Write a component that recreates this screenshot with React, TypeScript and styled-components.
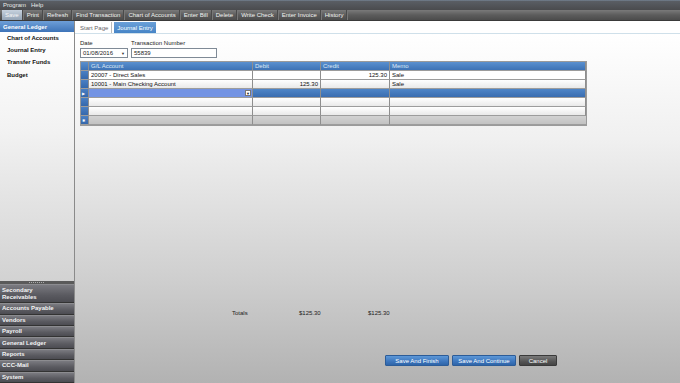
import React from 'react';
import styled, { createGlobalStyle, css } from 'styled-components';

const GlobalStyle = createGlobalStyle`
  html, body {
    margin: 0;
    padding: 0;
    width: 680px;
    height: 383px;
    overflow: hidden;
    font-family: "Liberation Sans", Arial, sans-serif;
  }
  * { box-sizing: border-box; }
`;

const Shell = styled.div`
  width: 680px;
  height: 383px;
  display: grid;
  grid-template-rows: 10px 11px 1fr;
  font-size: 6px;
  color: #222;
`;

const MenuBar = styled.div`
  display: flex;
  align-items: center;
  gap: 5px;
  padding: 0 3px;
  background: linear-gradient(#7d8fa3 0, #5a5e64 1px, #4a4b4e 100%);
  color: #e8e8e8;
`;

const Toolbar = styled.div`
  display: flex;
  align-items: stretch;
  padding: 0 2px;
  background: linear-gradient(#7a7a7a, #5c5c5c 50%, #4c4c4c);
  border-bottom: 1px solid #3a3a3a;
`;

const ToolButton = styled.div<{ $active?: boolean }>`
  display: flex;
  align-items: center;
  padding: 0 3px;
  color: #f2f2f2;
  border-right: 1px solid #4a4a4a;
  box-shadow: 1px 0 0 #777;
  margin-right: 1px;
  ${(p) =>
    p.$active &&
    css`
      background: linear-gradient(#c7d2de, #93a3b5);
      color: #f7f7f7;
    `}
`;

const Body = styled.div`
  display: grid;
  grid-template-columns: 75px 1fr;
  min-height: 0;
`;

const Sidebar = styled.div`
  display: flex;
  flex-direction: column;
  border-right: 1px solid #8a8a8a;
  min-height: 0;
`;

const SideHeader = styled.div`
  height: 11px;
  display: flex;
  align-items: center;
  padding-left: 3px;
  font-weight: bold;
  color: #fff;
  background: linear-gradient(#6e9fd8, #3e74b8);
`;

const SideList = styled.div`
  flex: 1;
  display: flex;
  flex-direction: column;
  gap: 6.2px;
  padding: 3px 0 0 7px;
  background: linear-gradient(#ffffff, #f2f2f2 40%, #d2d2d2);
`;

const SideItem = styled.div`
  font-weight: bold;
  color: #111;
  line-height: 6px;
`;

const Grip = styled.div`
  height: 3px;
  background: #5a5a5a;
  display: flex;
  justify-content: center;
  align-items: center;
  &::after {
    content: '';
    width: 16px;
    height: 1px;
    background: repeating-linear-gradient(90deg, #aaa 0 1px, transparent 1px 2px);
  }
`;

const NavButton = styled.div<{ $tall?: boolean }>`
  height: ${(p) => (p.$tall ? '19px' : '11.4px')};
  display: flex;
  align-items: center;
  padding-left: 2px;
  font-weight: bold;
  color: #f4f4f4;
  line-height: 7px;
  background: linear-gradient(#7a7a80, #5a5a60 60%, #4c4c52);
  border-top: 1px solid #8c8c90;
  border-bottom: 1px solid #333;
`;

const Main = styled.div`
  display: flex;
  flex-direction: column;
  min-height: 0;
`;

const TabStrip = styled.div`
  height: 13px;
  display: flex;
  align-items: flex-end;
  gap: 2px;
  padding-left: 2px;
  background: #fff;
  border-bottom: 1px solid #cfe0ea;
`;

const Tab = styled.div<{ $active?: boolean }>`
  height: 11px;
  display: flex;
  align-items: center;
  padding: 0 3px;
  color: #666;
  border-right: 1px solid #bbb;
  ${(p) =>
    p.$active &&
    css`
      color: #fff;
      border-right: none;
      background: linear-gradient(#6aa0d8, #4684c6);
    `}
`;

const Content = styled.div`
  flex: 1;
  display: flex;
  flex-direction: column;
  padding: 6px 0 0 5px;
  background: linear-gradient(#ffffff, #f0f0f0 30%, #cfcfcf 70%, #b2b2b2);
`;

const FormRow = styled.div`
  display: flex;
  gap: 3px;
  margin-bottom: 3px;
`;

const Field = styled.label`
  display: flex;
  flex-direction: column;
  gap: 2px;
  color: #222;
`;

const Input = styled.div<{ $w: number }>`
  width: ${(p) => p.$w}px;
  height: 10px;
  background: #fff;
  border: 1px solid #7f8a96;
  display: flex;
  align-items: center;
  justify-content: space-between;
  padding: 0 2px;
  color: #222;
`;

const Caret = styled.span`
  font-size: 4px;
  color: #333;
`;

const Grid = styled.div`
  width: 507px;
  display: grid;
  grid-template-columns: 8px 164px 68px 69px 1fr;
  border: 1px solid #9a9a9a;
`;

type CellKind = 'head' | 'white' | 'light' | 'sel' | 'selAcc' | 'new' | 'selector';

const cellBg: Record<CellKind, string> = {
  head: 'linear-gradient(#5a90cf, #3d72b5)',
  white: '#ffffff',
  light: 'linear-gradient(#ffffff, #e9e9e9)',
  sel: 'linear-gradient(#4f86c8, #3a6db0)',
  selAcc: '#7494e4',
  new: 'linear-gradient(#d2d2d2, #c2c2c2)',
  selector: 'linear-gradient(#4a80c4, #3568ac)',
};

const Cell = styled.div<{ $kind: CellKind; $right?: boolean }>`
  height: 9px;
  display: flex;
  align-items: center;
  justify-content: ${(p) => (p.$right ? 'flex-end' : 'space-between')};
  padding: 0 2px;
  background: ${(p) => cellBg[p.$kind]};
  color: ${(p) => (p.$kind === 'head' ? '#dfe9f5' : '#111')};
  border-right: 1px solid #8e8e8e;
  border-bottom: 1px solid #9c9c9c;
  white-space: nowrap;
  overflow: hidden;
  position: relative;
  &:last-child { border-right: none; }
`;

const DropBox = styled.span`
  position: absolute;
  right: 1px;
  top: 1px;
  width: 6px;
  height: 6px;
  background: #fff;
  border: 1px solid #777;
  display: flex;
  align-items: center;
  justify-content: center;
  font-size: 4px;
  color: #222;
`;

const Marker = styled.span`
  color: #fff;
  font-size: 4px;
  margin-left: -1px;
`;

const Spacer = styled.div`
  flex: 1;
`;

const Totals = styled.div`
  display: flex;
  align-items: center;
  height: 10px;
  padding-left: 152px;
  color: #222;
  margin-bottom: 37px;
`;

const TotalLabel = styled.span<{ $w: number }>`
  width: ${(p) => p.$w}px;
`;

const Actions = styled.div`
  display: flex;
  gap: 3px;
  padding-left: 305px;
  margin-bottom: 17px;
`;

const Button = styled.div<{ $w: number; $variant?: 'blue' | 'gray' }>`
  width: ${(p) => p.$w}px;
  height: 11px;
  display: flex;
  align-items: center;
  justify-content: center;
  color: #fff;
  border-radius: 1px;
  background: ${(p) =>
    p.$variant === 'gray'
      ? 'linear-gradient(#7a7a7a, #555 60%, #444)'
      : 'linear-gradient(#5d98d8, #3d76bd 60%, #2e64a8)'};
  border: 1px solid ${(p) => (p.$variant === 'gray' ? '#3a3a3a' : '#2c5c98')};
`;

const toolItems = [
  'Save',
  'Print',
  'Refresh',
  'Find Transaction',
  'Chart of Accounts',
  'Enter Bill',
  'Delete',
  'Write Check',
  'Enter Invoice',
  'History',
];

const navItems = ['Accounts Payable', 'Vendors', 'Payroll', 'General Ledger', 'Reports', 'CCC-Mail', 'System'];

type Row = { kind: CellKind; acc?: string; debit?: string; credit?: string; memo?: string; marker?: string; current?: boolean };

const rows: Row[] = [
  { kind: 'white', acc: '20007 - Direct Sales', credit: '125.30', memo: 'Sale' },
  { kind: 'light', acc: '10001 - Main Checking Account', debit: '125.30', memo: 'Sale' },
  { kind: 'sel', marker: '▶', current: true },
  { kind: 'light' },
  { kind: 'light' },
  { kind: 'new', marker: '✱' },
];

const App = () => (
  <Shell>
    <GlobalStyle />
    <MenuBar>
      <span>Program</span>
      <span>Help</span>
    </MenuBar>
    <Toolbar>
      {toolItems.map((t, i) => (
        <ToolButton key={t} $active={i === 0}>
          {t}
        </ToolButton>
      ))}
    </Toolbar>
    <Body>
      <Sidebar>
        <SideHeader>General Ledger</SideHeader>
        <SideList>
          <SideItem>Chart of Accounts</SideItem>
          <SideItem>Journal Entry</SideItem>
          <SideItem>Transfer Funds</SideItem>
          <SideItem>Budget</SideItem>
        </SideList>
        <Grip />
        <NavButton $tall>
          Secondary
          <br />
          Receivables
        </NavButton>
        {navItems.map((n) => (
          <NavButton key={n}>{n}</NavButton>
        ))}
      </Sidebar>
      <Main>
        <TabStrip>
          <Tab>Start Page</Tab>
          <Tab $active>Journal Entry</Tab>
        </TabStrip>
        <Content>
          <FormRow>
            <Field>
              Date
              <Input $w={48}>
                01/08/2016 <Caret>▼</Caret>
              </Input>
            </Field>
            <Field>
              Transaction Number
              <Input $w={86}>55839</Input>
            </Field>
          </FormRow>
          <Grid>
            <Cell $kind="head" />
            <Cell $kind="head">G/L Account</Cell>
            <Cell $kind="head">Debit</Cell>
            <Cell $kind="head">Credit</Cell>
            <Cell $kind="head">Memo</Cell>
            {rows.map((r, i) => (
              <React.Fragment key={i}>
                <Cell $kind="selector">{r.marker && <Marker>{r.marker}</Marker>}</Cell>
                <Cell $kind={r.current ? 'selAcc' : r.kind}>
                  {r.acc}
                  {r.current && <DropBox>▼</DropBox>}
                </Cell>
                <Cell $kind={r.kind} $right>
                  {r.debit}
                </Cell>
                <Cell $kind={r.kind} $right>
                  {r.credit}
                </Cell>
                <Cell $kind={r.kind}>{r.memo}</Cell>
              </React.Fragment>
            ))}
          </Grid>
          <Spacer />
          <Totals>
            <TotalLabel $w={67}>Totals</TotalLabel>
            <TotalLabel $w={69}>$125.30</TotalLabel>
            <TotalLabel $w={40}>$125.30</TotalLabel>
          </Totals>
          <Actions>
            <Button $w={64}>Save And Finish</Button>
            <Button $w={64}>Save And Continue</Button>
            <Button $w={38} $variant="gray">
              Cancel
            </Button>
          </Actions>
        </Content>
      </Main>
    </Body>
  </Shell>
);

export default App;
